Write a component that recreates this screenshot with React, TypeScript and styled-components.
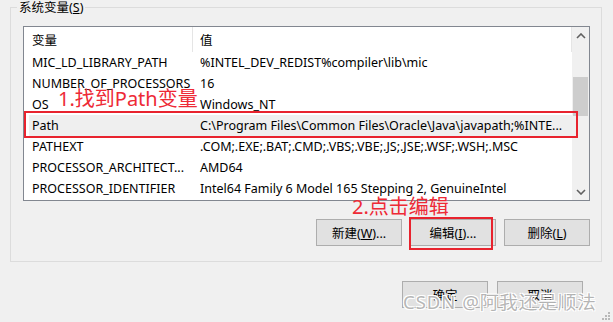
import React from 'react'
import styled, { createGlobalStyle } from 'styled-components'

const GlobalStyle = createGlobalStyle`
  html, body {
    margin: 0;
    padding: 0;
    background: #f0f0f0;
  }
  body {
    font-family: 'Noto Sans', 'Noto Sans CJK SC', sans-serif;
    font-size: 12px;
    color: #000;
  }
`

type Variable = { name: string; value: string; hot?: boolean }

const variables: Variable[] = [
  { name: 'MIC_LD_LIBRARY_PATH', value: '%INTEL_DEV_REDIST%compiler\\lib\\mic' },
  { name: 'NUMBER_OF_PROCESSORS', value: '16' },
  { name: 'OS', value: 'Windows_NT' },
  {
    name: 'Path',
    value: 'C:\\Program Files\\Common Files\\Oracle\\Java\\javapath;%INTE...',
    hot: true,
  },
  { name: 'PATHEXT', value: '.COM;.EXE;.BAT;.CMD;.VBS;.VBE;.JS;.JSE;.WSF;.WSH;.MSC' },
  { name: 'PROCESSOR_ARCHITECT...', value: 'AMD64' },
  { name: 'PROCESSOR_IDENTIFIER', value: 'Intel64 Family 6 Model 165 Stepping 2, GenuineIntel' },
]

function App() {
  return (
    <Page>
      <GlobalStyle />
      <GroupBox>
        <Legend>
          系统变量(<u>S</u>)
        </Legend>
        <GroupContent>
          <ListView>
            <ListBody>
              <HeaderRow>
                <HeaderCell>变量</HeaderCell>
                <HeaderCell $divider>值</HeaderCell>
              </HeaderRow>
              {variables.map((v) => (
                <Row key={v.name} $hot={v.hot}>
                  <NameCell>{v.name}</NameCell>
                  <ValueCell>{v.value}</ValueCell>
                </Row>
              ))}
            </ListBody>
            <ScrollBar>
              <ArrowBox>
                <svg width="10" height="6" viewBox="0 0 10 6">
                  <polyline points="1,5 5,1 9,5" fill="none" stroke="#606060" strokeWidth="1.6" />
                </svg>
              </ArrowBox>
              <Track>
                <Thumb />
              </Track>
              <ArrowBox>
                <svg width="10" height="6" viewBox="0 0 10 6">
                  <polyline points="1,1 5,5 9,1" fill="none" stroke="#606060" strokeWidth="1.6" />
                </svg>
              </ArrowBox>
            </ScrollBar>
          </ListView>
          <ButtonRow>
            <Button>
              新建(<u>W</u>)...
            </Button>
            <Button>
              编辑(<u>I</u>)...
            </Button>
            <Button>
              删除(<u>L</u>)
            </Button>
          </ButtonRow>
        </GroupContent>
      </GroupBox>
      <DialogButtons>
        <Button>确定</Button>
        <Button>取消</Button>
      </DialogButtons>

      <Note style={{ left: 58, top: 86 }}>1.找到Path变量</Note>
      <Mark style={{ left: 24, top: 111, width: 554, height: 27 }} />
      <Note style={{ left: 352, top: 194 }}>2.点击编辑</Note>
      <Mark style={{ left: 409, top: 217, width: 84, height: 33 }} />

      <Watermark>CSDN @阿我还是顺法</Watermark>
      <Grip width="8" height="8" viewBox="0 0 8 8">
        <rect x="6" y="0" width="2" height="2" fill="#b8b8b8" />
        <rect x="3" y="3" width="2" height="2" fill="#b8b8b8" />
        <rect x="6" y="3" width="2" height="2" fill="#b8b8b8" />
        <rect x="0" y="6" width="2" height="2" fill="#b8b8b8" />
        <rect x="3" y="6" width="2" height="2" fill="#b8b8b8" />
        <rect x="6" y="6" width="2" height="2" fill="#b8b8b8" />
      </Grip>
    </Page>
  )
}

export default App

const Page = styled.div`
  position: relative;
  width: 613px;
  height: 322px;
  overflow: hidden;
  display: flex;
  flex-direction: column;
`

const GroupBox = styled.fieldset`
  margin: 0 11px 0 10px;
  padding: 0 5px 0 6px;
  border: 1px solid #dcdcdc;
  min-width: 0;
`

const Legend = styled.legend`
  padding: 0 2px;
  line-height: 15px;
  font-size: 12.5px;
`

const GroupContent = styled.div`
  padding: 11px 6px 15px 6px;
  display: flex;
  flex-direction: column;
`

const ListView = styled.div`
  height: 173px;
  border: 1px solid #828790;
  background: #fff;
  display: grid;
  grid-template-columns: 1fr 17px;
`

const ListBody = styled.div`
  display: flex;
  flex-direction: column;
  min-width: 0;
`

const HeaderRow = styled.div`
  height: 25px;
  display: grid;
  grid-template-columns: 168px 1fr;
  align-items: center;
  border-right: 1px solid #e5e5e5;
  font-size: 12.5px;
`

const HeaderCell = styled.div<{ $divider?: boolean }>`
  height: 100%;
  display: flex;
  align-items: center;
  padding-left: ${(p) => (p.$divider ? '7px' : '8px')};
  border-left: ${(p) => (p.$divider ? '1px solid #e5e5e5' : 'none')};
`

const Row = styled.div<{ $hot?: boolean }>`
  height: 21px;
  margin-left: 5px;
  display: grid;
  grid-template-columns: 163px 1fr;
  align-items: center;
  background: ${(p) => (p.$hot ? '#efefef' : 'transparent')};
  font-size: 12.5px;
  white-space: nowrap;
`

const NameCell = styled.div`
  padding-left: 3px;
  overflow: hidden;
`

const ValueCell = styled.div`
  padding-left: 8px;
  overflow: hidden;
`

const ScrollBar = styled.div`
  background: #f0f0f0;
  display: flex;
  flex-direction: column;
`

const ArrowBox = styled.div`
  height: 17px;
  display: flex;
  align-items: center;
  justify-content: center;
`

const Track = styled.div`
  flex: 1;
  padding-top: 33px;
`

const Thumb = styled.div`
  height: 39px;
  margin: 0 1px;
  background: #cdcdcd;
`

const ButtonRow = styled.div`
  margin-top: 18px;
  display: flex;
  justify-content: flex-end;
  gap: 8px;
`

const Button = styled.button`
  width: 86px;
  height: 27px;
  padding: 0;
  background: #e1e1e1;
  border: 1px solid #adadad;
  font-family: inherit;
  font-size: 12.5px;
  color: #000;
`

const DialogButtons = styled.div`
  margin-top: 19px;
  padding-right: 30px;
  display: flex;
  justify-content: flex-end;
  gap: 9px;
`

const Note = styled.div`
  position: absolute;
  font-size: 20px;
  line-height: 26px;
  color: #ee2a36;
  white-space: nowrap;
`

const Mark = styled.div`
  position: absolute;
  box-sizing: border-box;
  border: 2px solid #e8232e;
`

const Watermark = styled.div`
  position: absolute;
  left: 403px;
  top: 288px;
  font-size: 18.5px;
  letter-spacing: 1px;
  color: rgba(120, 120, 120, 0.55);
  text-shadow: -1px -1px 0 #fff, 1px -1px 0 #fff, -1px 1px 0 #fff, 1px 1px 0 #fff;
  white-space: nowrap;
`

const Grip = styled.svg`
  position: absolute;
  right: 3px;
  bottom: 2px;
`
